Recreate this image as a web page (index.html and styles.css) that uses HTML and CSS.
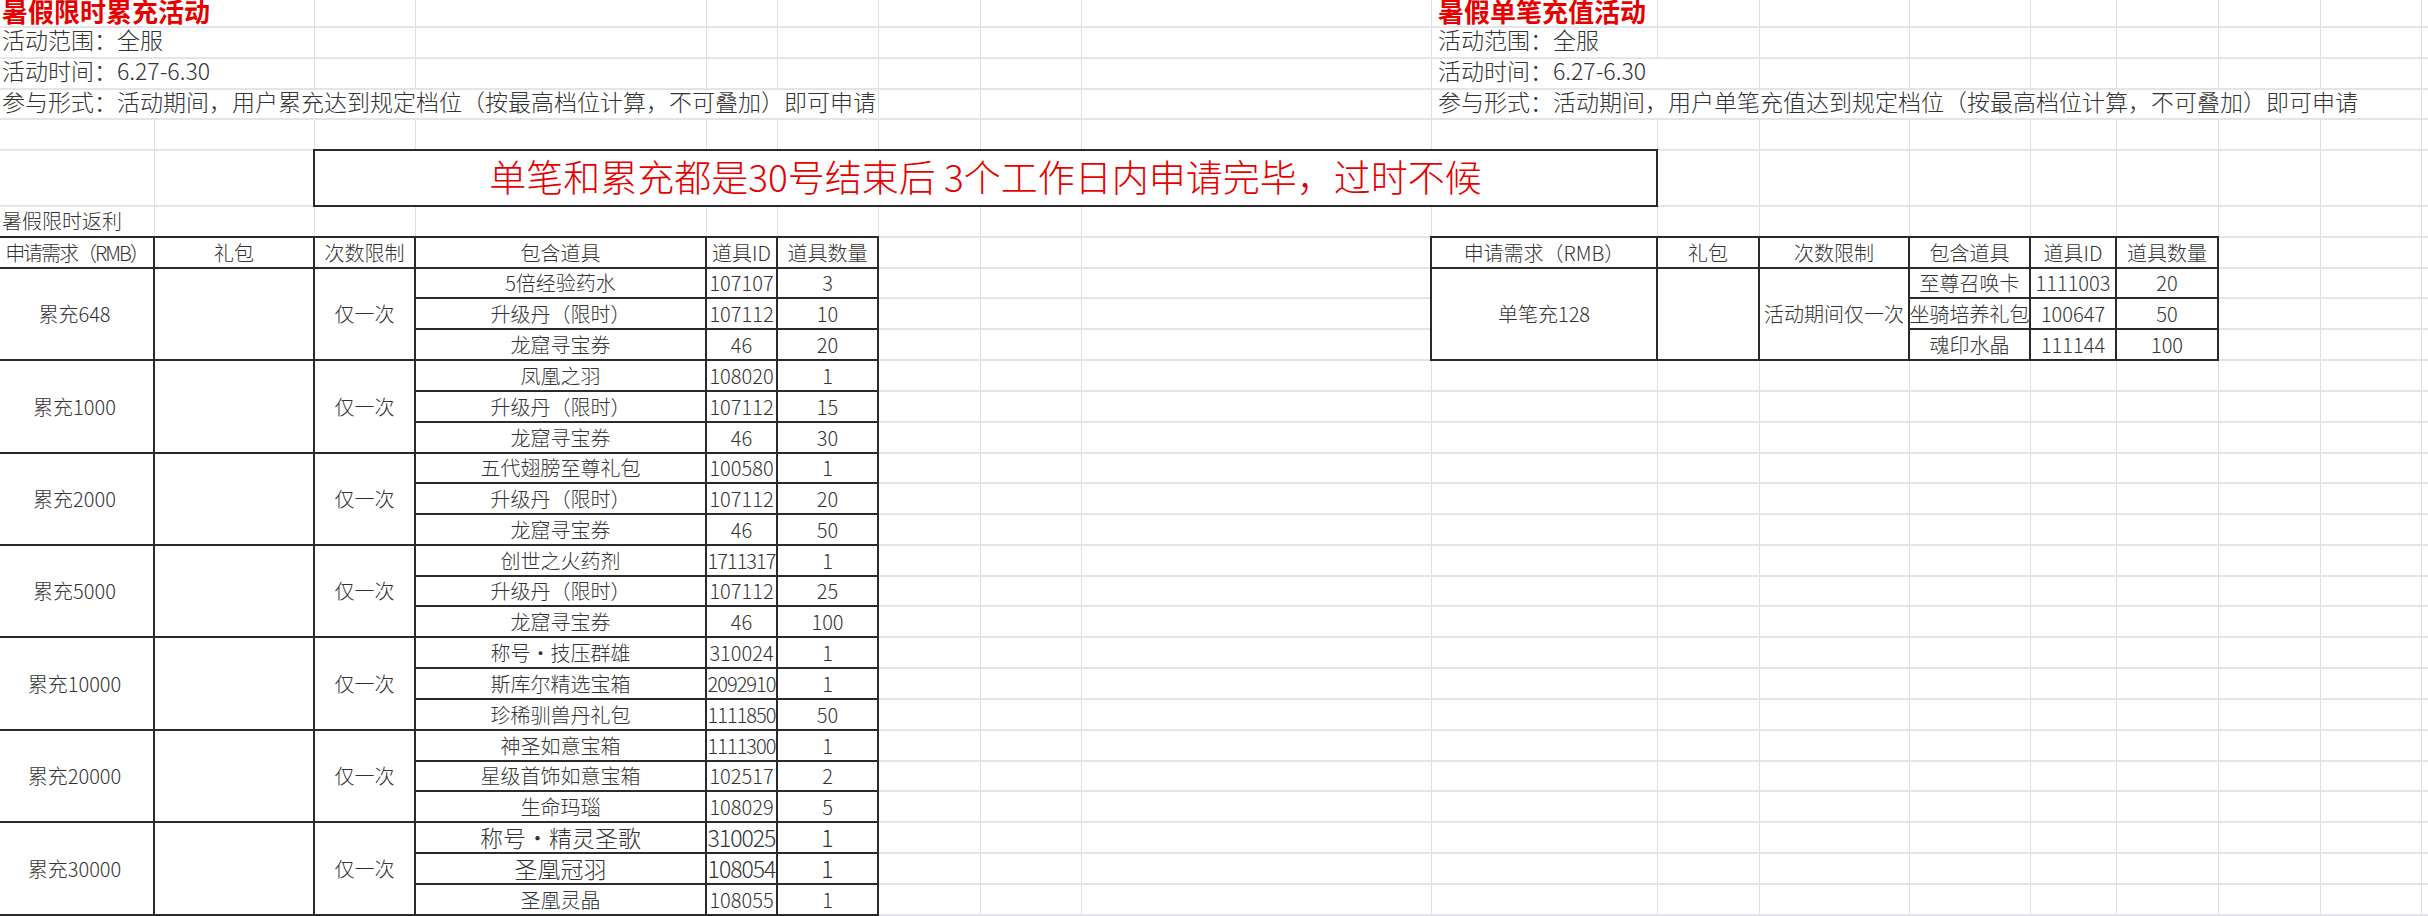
FILE: index.html
```html
<!DOCTYPE html>
<html lang="zh-CN">
<head>
<meta charset="utf-8">
<title>暑假活动</title>
<link rel="stylesheet" href="styles.css">
</head>
<body>
<div class="sheet">
  <div class="layer vlines">
    <div></div><div></div><div></div><div></div><div></div><div></div>
    <div></div><div></div><div></div><div></div><div></div><div></div>
    <div></div><div></div><div></div><div></div><div></div><div></div>
  </div>
  <div class="layer hlines">
    <div></div><div></div><div></div><div></div><div></div><div></div><div></div><div></div>
    <div></div><div></div><div></div><div></div><div></div><div></div><div></div><div></div>
    <div></div><div></div><div></div><div></div><div></div><div></div><div></div><div></div>
    <div></div><div></div><div></div><div></div><div></div>
  </div>
  <div class="layer cells">
    <div class="cell title title-left">暑假限时累充活动</div>
    <div class="cell info info-left-2">活动范围：全服</div>
    <div class="cell info info-left-3">活动时间：6.27-6.30</div>
    <div class="cell info info-left-4">参与形式：活动期间，用户累充达到规定档位（按最高档位计算，不可叠加）即可申请</div>

    <div class="cell title title-right">暑假单笔充值活动</div>
    <div class="cell info info-right-2">活动范围：全服</div>
    <div class="cell info info-right-3">活动时间：6.27-6.30</div>
    <div class="cell info info-right-4">参与形式：活动期间，用户单笔充值达到规定档位（按最高档位计算，不可叠加）即可申请</div>

    <div class="banner">单笔和累充都是30号结束后 3个工作日内申请完毕，过时不候</div>

    <div class="cell sub">暑假限时返利</div>

    <div class="tbl tbl-left">
      <div class="td th tight">申请需求（RMB）</div>
      <div class="td th">礼包</div>
      <div class="td th">次数限制</div>
      <div class="td th">包含道具</div>
      <div class="td th">道具ID</div>
      <div class="td th">道具数量</div>

      <div class="td grp">累充648</div><div class="td grp"></div><div class="td grp">仅一次</div>
      <div class="td">5倍经验药水</div><div class="td">107107</div><div class="td">3</div>
      <div class="td">升级丹（限时）</div><div class="td">107112</div><div class="td">10</div>
      <div class="td">龙窟寻宝券</div><div class="td">46</div><div class="td">20</div>

      <div class="td grp">累充1000</div><div class="td grp"></div><div class="td grp">仅一次</div>
      <div class="td">凤凰之羽</div><div class="td">108020</div><div class="td">1</div>
      <div class="td">升级丹（限时）</div><div class="td">107112</div><div class="td">15</div>
      <div class="td">龙窟寻宝券</div><div class="td">46</div><div class="td">30</div>

      <div class="td grp">累充2000</div><div class="td grp"></div><div class="td grp">仅一次</div>
      <div class="td">五代翅膀至尊礼包</div><div class="td">100580</div><div class="td">1</div>
      <div class="td">升级丹（限时）</div><div class="td">107112</div><div class="td">20</div>
      <div class="td">龙窟寻宝券</div><div class="td">46</div><div class="td">50</div>

      <div class="td grp">累充5000</div><div class="td grp"></div><div class="td grp">仅一次</div>
      <div class="td">创世之火药剂</div><div class="td narrow">1711317</div><div class="td">1</div>
      <div class="td">升级丹（限时）</div><div class="td">107112</div><div class="td">25</div>
      <div class="td">龙窟寻宝券</div><div class="td">46</div><div class="td">100</div>

      <div class="td grp">累充10000</div><div class="td grp"></div><div class="td grp">仅一次</div>
      <div class="td">称号•技压群雄</div><div class="td">310024</div><div class="td">1</div>
      <div class="td">斯库尔精选宝箱</div><div class="td narrow">2092910</div><div class="td">1</div>
      <div class="td">珍稀驯兽丹礼包</div><div class="td narrow">1111850</div><div class="td">50</div>

      <div class="td grp">累充20000</div><div class="td grp"></div><div class="td grp">仅一次</div>
      <div class="td">神圣如意宝箱</div><div class="td narrow">1111300</div><div class="td">1</div>
      <div class="td">星级首饰如意宝箱</div><div class="td">102517</div><div class="td">2</div>
      <div class="td">生命玛瑙</div><div class="td">108029</div><div class="td">5</div>

      <div class="td grp">累充30000</div><div class="td grp"></div><div class="td grp">仅一次</div>
      <div class="td big">称号•精灵圣歌</div><div class="td big narrow">310025</div><div class="td big">1</div>
      <div class="td big">圣凰冠羽</div><div class="td big narrow">108054</div><div class="td big">1</div>
      <div class="td">圣凰灵晶</div><div class="td">108055</div><div class="td">1</div>
    </div>

    <div class="tbl tbl-right">
      <div class="td th first">申请需求（RMB）</div>
      <div class="td th">礼包</div>
      <div class="td th">次数限制</div>
      <div class="td th">包含道具</div>
      <div class="td th">道具ID</div>
      <div class="td th">道具数量</div>

      <div class="td grp first">单笔充128</div><div class="td grp"></div><div class="td grp">活动期间仅一次</div>
      <div class="td">至尊召唤卡</div><div class="td">1111003</div><div class="td">20</div>
      <div class="td">坐骑培养礼包</div><div class="td">100647</div><div class="td">50</div>
      <div class="td">魂印水晶</div><div class="td">111144</div><div class="td">100</div>
    </div>
  </div>
</div>
</body>
</html>
```

FILE: styles.css
```css
:root {
  --cols: 159px 160px 101px 291px 71px 101px 102px 101px 350px 226px 102px 150px 121px 86px 102px 102px 101px 106px;
  --rows: 28px 31px 31px 30px 31px 56px 31px 31px
          30px 31px 31px 31px 31px 31px 30px 31px 31px 31px 30px
          31px 31px 31px 31px 31px 30px 31px 31px 31px 31px;
  --grid-v: #dfdfe5;
  --grid-h: #e4e4ea;
  --ink: #333;
  --line: #2a2a2a;
  --red: #e60000;
}

html, body {
  margin: 0;
  padding: 0;
  background: #fff;
  overflow: hidden;
}

body {
  width: 2428px;
  height: 916px;
}

.sheet {
  display: grid;
  margin-left: -4px;
  width: 2532px;
  font-family: "Noto Sans CJK SC", sans-serif;
  font-weight: 300;
  color: var(--ink);
}

.layer {
  grid-area: 1 / 1;
  display: grid;
}

.vlines {
  grid-template-columns: var(--cols);
  grid-template-rows: 1fr;
}

.vlines > div {
  border-right: 1px solid var(--grid-v);
}

.hlines {
  grid-template-columns: 1fr;
  grid-template-rows: var(--rows);
}

.hlines > div {
  border-bottom: 2px solid var(--grid-h);
}

.cells {
  grid-template-columns: var(--cols);
  grid-template-rows: var(--rows);
}

.cell {
  display: flex;
  align-items: center;
  white-space: nowrap;
  background: #fff;
  border-right: 1px solid var(--grid-v);
  border-bottom: 2px solid var(--grid-h);
  padding-left: 6px;
  min-width: 0;
}

.title {
  color: var(--red);
  font-weight: 700;
  font-size: 26px;
  line-height: 22px;
  padding-bottom: 4px;
}

.info {
  font-size: 23px;
  line-height: 23px;
  padding-bottom: 6px;
}

.title-left { grid-row: 1; grid-column: 1 / 3; }
.info-left-2 { grid-row: 2; grid-column: 1 / 3; }
.info-left-3 { grid-row: 3; grid-column: 1 / 3; }
.info-left-4 { grid-row: 4; grid-column: 1 / 7; }

.title-right { grid-row: 1; grid-column: 10; }
.info-right-2 { grid-row: 2; grid-column: 10; }
.info-right-3 { grid-row: 3; grid-column: 10 / 12; }
.info-right-4 { grid-row: 4; grid-column: 10 / 18; }

.banner {
  grid-row: 6;
  grid-column: 3 / 11;
  margin: -2px 0 0 -2px;
  border: 2px solid var(--line);
  background: #fff;
  color: var(--red);
  font-size: 37px;
  line-height: 37px;
  display: flex;
  align-items: center;
  justify-content: center;
  padding-bottom: 4px;
  white-space: nowrap;
}

.sub {
  grid-row: 7;
  grid-column: 1;
  font-size: 20px;
  line-height: 20px;
  padding-bottom: 2px;
}

.tbl {
  display: grid;
  margin-top: -2px;
  font-size: 20px;
  line-height: 20px;
}

.tbl-left {
  grid-row: 8 / 30;
  grid-column: 1 / 7;
  grid-template-columns: 159px 160px 101px 291px 71px 101px;
  grid-template-rows: 33px 30px 31px 31px 31px 31px 31px 30px 31px 31px 31px 30px
                      31px 31px 31px 31px 31px 30px 31px 31px 31px 31px;
}

.tbl-right {
  grid-row: 8 / 12;
  grid-column: 10 / 16;
  margin-left: -2px;
  grid-template-columns: 228px 102px 150px 121px 86px 102px;
  grid-template-rows: 33px 30px 31px 31px;
}

.td {
  display: flex;
  align-items: center;
  justify-content: center;
  white-space: nowrap;
  overflow: hidden;
  min-width: 0;
  background: #fff;
  border-right: 2px solid var(--line);
  border-bottom: 2px solid var(--line);
}

.th {
  border-top: 2px solid var(--line);
}

.first {
  border-left: 2px solid var(--line);
}

.grp {
  grid-row: span 3;
}

.big {
  font-size: 23px;
  line-height: 23px;
}

.narrow {
  letter-spacing: -1px;
}

.tight {
  letter-spacing: -2px;
  padding-left: 4px;
}
```
